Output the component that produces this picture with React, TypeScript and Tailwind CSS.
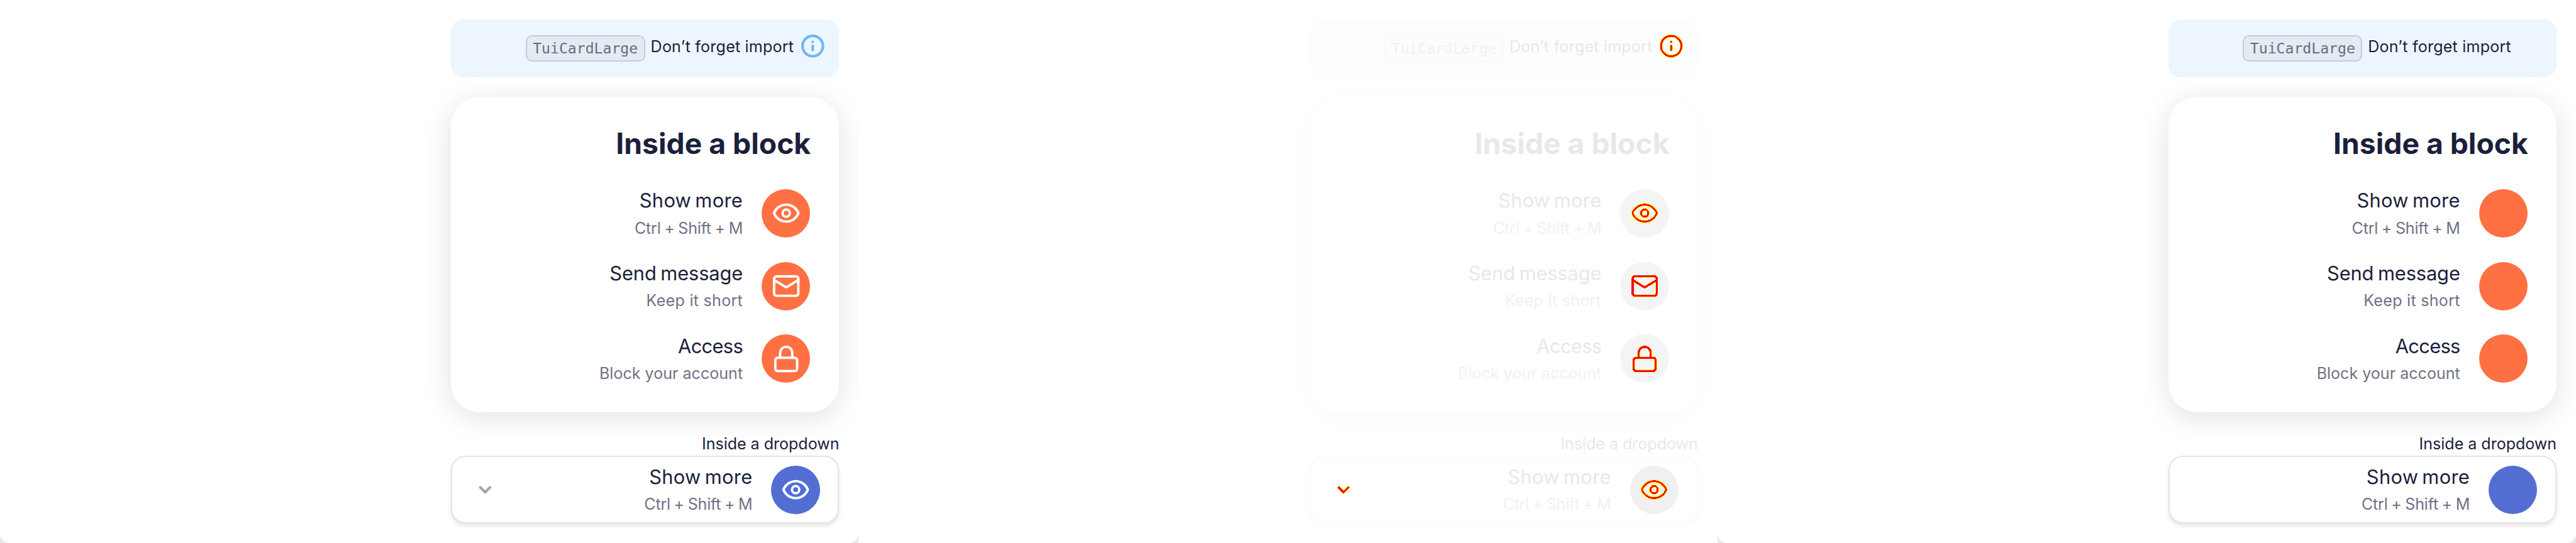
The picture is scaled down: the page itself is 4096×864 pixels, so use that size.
import { clsx } from "clsx";

type Variant = "full" | "diff" | "plain";
type IconName = "eye" | "mail" | "lock" | "info" | "chevron";

function Shape({ name }: { name: IconName }) {
  switch (name) {
    case "eye":
      return (
        <>
          <path d="M2.062 12.348a1 1 0 0 1 0-.696 10.75 10.75 0 0 1 19.876 0 1 1 0 0 1 0 .696 10.75 10.75 0 0 1-19.876 0" />
          <circle cx="12" cy="12" r="3" />
        </>
      );
    case "mail":
      return (
        <>
          <rect x="2" y="4" width="20" height="16" rx="2" />
          <path d="m22 7-9.4 5.8a1.15 1.15 0 0 1-1.2 0L2 7" />
        </>
      );
    case "lock":
      return (
        <>
          <rect x="3" y="11" width="18" height="11" rx="2" />
          <path d="M7 11V7a5 5 0 0 1 10 0v4" />
        </>
      );
    case "info":
      return (
        <>
          <circle cx="12" cy="12" r="10.1" />
          <path d="M12 11.7v4.3M12 7.8v.15" />
        </>
      );
    case "chevron":
      return <path d="m6 9 6 6 6-6" />;
  }
}

const strokes: Record<IconName, { base: number; outer: number; inner: number }> = {
  eye: { base: 2, outer: 2.4, inner: 1.4 },
  mail: { base: 2, outer: 2.1, inner: 1.75 },
  lock: { base: 2, outer: 2.1, inner: 1.75 },
  info: { base: 2.6, outer: 2.9, inner: 1.8 },
  chevron: { base: 3.3, outer: 3.6, inner: 2.5 },
};

function Icon({ name, variant, className }: { name: IconName; variant: Variant; className: string }) {
  const s = strokes[name];
  return (
    <svg viewBox="0 0 24 24" fill="none" strokeLinecap="round" strokeLinejoin="round" className={clsx("shrink-0", className)}>
      {variant === "full" && (
        <g stroke="currentColor" strokeWidth={s.base}>
          <Shape name={name} />
        </g>
      )}
      {variant === "diff" && (
        <g shapeRendering="crispEdges">
          <g stroke="#ffff00" strokeWidth={s.outer}>
            <Shape name={name} />
          </g>
          <g stroke="#ff0000" strokeWidth={s.inner}>
            <Shape name={name} />
          </g>
        </g>
      )}
    </svg>
  );
}

interface CellProps {
  icon: IconName;
  title: string;
  titleClass: string;
  subtitle: string;
  subtitleClass: string;
  circle: string;
  variant: Variant;
}

function Cell({ icon, title, titleClass, subtitle, subtitleClass, circle, variant }: CellProps) {
  const diff = variant === "diff";
  return (
    <div className="flex h-[77.14px] items-center justify-end gap-[30px]">
      <div className="flex flex-col items-end gap-[8.7px] whitespace-nowrap">
        <div className={clsx("text-[30.86px] leading-[38.57px]", diff ? "text-[#e8e8e8]" : "text-[#1b1f3b]", titleClass)}>{title}</div>
        <div className={clsx("text-[25.07px] leading-[30.86px]", diff ? "text-[#f1f1f1]" : "text-[#6f7285]", subtitleClass)}>{subtitle}</div>
      </div>
      <div className={clsx("flex size-[77.14px] shrink-0 items-center justify-center rounded-full text-white", circle)}>
        <Icon name={icon} variant={variant} className="size-[46.28px]" />
      </div>
    </div>
  );
}

const showMore = {
  icon: "eye" as const,
  title: "Show more",
  titleClass: "tracking-[0.009em] [word-spacing:-0.09em]",
  subtitle: "Ctrl + Shift + M",
  subtitleClass: "tracking-[-0.008em] [word-spacing:-0.046em]",
};

const cells = [
  showMore,
  {
    icon: "mail" as const,
    title: "Send message",
    titleClass: "tracking-[-0.005em] [word-spacing:-0.06em]",
    subtitle: "Keep it short",
    subtitleClass: "tracking-[0.011em]",
  },
  {
    icon: "lock" as const,
    title: "Access",
    titleClass: "tracking-[-0.022em]",
    subtitle: "Block your account",
    subtitleClass: "",
  },
];

function Panel({ variant }: { variant: Variant }) {
  const diff = variant === "diff";
  const primary = diff ? "text-[#e8e8e8]" : "text-[#1b1f3b]";
  return (
    <section className={clsx("flex-1 overflow-hidden", diff ? "bg-[#fcfcfc]" : "bg-[#e9e9e9]")}>
      <div className="flex h-full flex-col items-end rounded-b-[16px] bg-white pt-[30.86px] pr-[30.86px]">
        <div
          className={clsx(
            "flex h-[92.57px] w-[617.1px] items-start justify-end rounded-[19.3px] pr-[23.1px] whitespace-nowrap",
            diff ? "bg-[#fdfdfd]" : "bg-[#edf6fe]",
          )}
        >
          <code
            className={clsx(
              "mt-[25px] mr-[9px] h-[42.4px] rounded-[10px] border-2 px-[9.4px] font-['DejaVu_Sans_Mono',monospace] text-[23.14px] leading-[38.4px]",
              diff ? "border-[#f9f9f9] bg-[#fcfcfc] text-[#f1f1f1]" : "border-[#c6cdd6] bg-[#e4ebf3] text-[#6a6d80]",
            )}
          >
            TuiCardLarge
          </code>
          <span className={clsx("mt-[24.2px] mr-[10.6px] text-[25.07px] leading-[38.57px] tracking-[0.008em]", primary)}>Don’t forget import</span>
          <Icon name="info" variant={variant} className="mt-[23.1px] size-[38.57px] text-[#70b6f6]" />
        </div>

        <div
          className={clsx(
            "mt-[30.86px] flex h-[501.4px] w-[617.1px] flex-col rounded-[46.3px] bg-white p-[46.28px]",
            diff ? "shadow-[0_8px_46px_rgba(0,0,0,0.018)]" : "shadow-[0_8px_46px_rgba(0,0,0,0.12)]",
          )}
        >
          <h2 className={clsx("-mr-px text-right text-[46.28px] leading-[54px] font-bold", primary)}>Inside a block</h2>
          <div className="mt-[46.28px] flex flex-col gap-[38.57px]">
            {cells.map((cell) => (
              <Cell key={cell.title} {...cell} variant={variant} circle={diff ? "bg-[#f4f4f4]" : "bg-[#ff7043]"} />
            ))}
          </div>
        </div>

        <div className={clsx("mt-[35.7px] text-[25.07px] leading-[30.86px] tracking-[-0.001em] whitespace-nowrap", primary)}>Inside a dropdown</div>

        <div
          className={clsx(
            "mt-[2.9px] flex h-[108px] w-[617.1px] items-center justify-between rounded-[23.1px] border-2 bg-white pr-[28.9px] pl-[36.6px]",
            diff ? "border-[#fbfbfb] shadow-[0_4px_6px_rgba(0,0,0,0.012)]" : "border-[#e4e4e4] shadow-[0_4px_6px_rgba(0,0,0,0.1)]",
          )}
        >
          <Icon name="chevron" variant={variant} className="size-[30.86px] text-[#a4a5b3]" />
          <Cell {...showMore} variant={variant} circle={diff ? "bg-[#f0f0f0]" : "bg-[#526ed3]"} />
        </div>
      </div>
    </section>
  );
}

export default function App() {
  return (
    <main className="flex h-[864px] w-full overflow-hidden bg-white font-[Inter,sans-serif]">
      <Panel variant="full" />
      <Panel variant="diff" />
      <Panel variant="plain" />
    </main>
  );
}
